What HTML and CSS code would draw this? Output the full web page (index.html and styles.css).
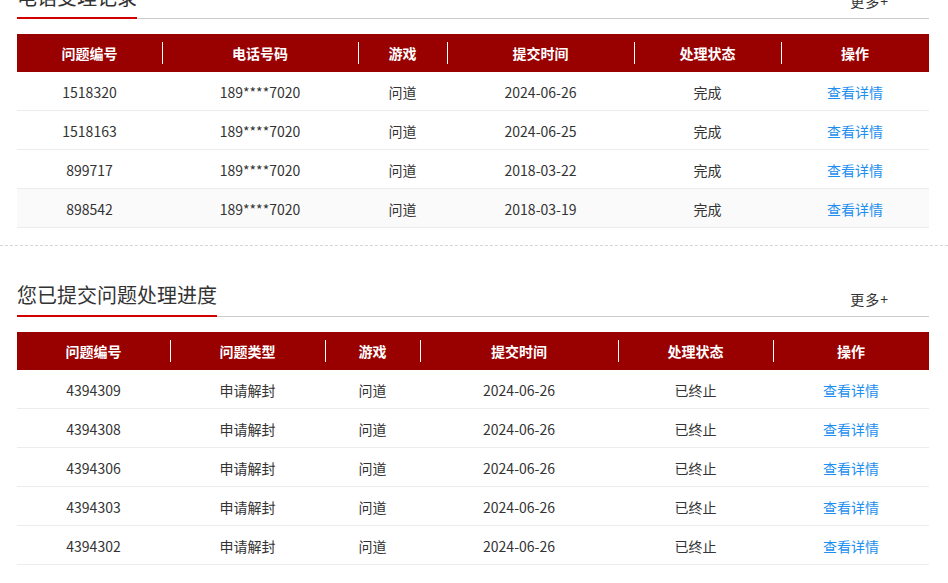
FILE: index.html
```html
<!DOCTYPE html>
<html lang="zh-CN">
<head>
<meta charset="utf-8">
<title>问题处理进度</title>
<link rel="stylesheet" href="styles.css">
</head>
<body>
<div class="page">
  <section class="panel">
    <div class="panel-head">
      <h2 class="panel-title">电话受理记录</h2>
      <a class="more" href="#">更多+</a>
    </div>
    <table class="grid grid-phone">
      <colgroup>
        <col class="c1"><col class="c2"><col class="c3"><col class="c4"><col class="c5"><col class="c6">
      </colgroup>
      <thead>
        <tr><th>问题编号</th><th>电话号码</th><th>游戏</th><th>提交时间</th><th>处理状态</th><th>操作</th></tr>
      </thead>
      <tbody>
        <tr><td>1518320</td><td>189****7020</td><td>问道</td><td>2024-06-26</td><td>完成</td><td><a href="#">查看详情</a></td></tr>
        <tr><td>1518163</td><td>189****7020</td><td>问道</td><td>2024-06-25</td><td>完成</td><td><a href="#">查看详情</a></td></tr>
        <tr><td>899717</td><td>189****7020</td><td>问道</td><td>2018-03-22</td><td>完成</td><td><a href="#">查看详情</a></td></tr>
        <tr class="hover"><td>898542</td><td>189****7020</td><td>问道</td><td>2018-03-19</td><td>完成</td><td><a href="#">查看详情</a></td></tr>
      </tbody>
    </table>
  </section>

  <section class="panel">
    <div class="panel-head">
      <h2 class="panel-title">您已提交问题处理进度</h2>
      <a class="more" href="#">更多+</a>
    </div>
    <table class="grid grid-issue">
      <colgroup>
        <col class="c1"><col class="c2"><col class="c3"><col class="c4"><col class="c5"><col class="c6">
      </colgroup>
      <thead>
        <tr><th>问题编号</th><th>问题类型</th><th>游戏</th><th>提交时间</th><th>处理状态</th><th>操作</th></tr>
      </thead>
      <tbody>
        <tr><td>4394309</td><td>申请解封</td><td>问道</td><td>2024-06-26</td><td>已终止</td><td><a href="#">查看详情</a></td></tr>
        <tr><td>4394308</td><td>申请解封</td><td>问道</td><td>2024-06-26</td><td>已终止</td><td><a href="#">查看详情</a></td></tr>
        <tr><td>4394306</td><td>申请解封</td><td>问道</td><td>2024-06-26</td><td>已终止</td><td><a href="#">查看详情</a></td></tr>
        <tr><td>4394303</td><td>申请解封</td><td>问道</td><td>2024-06-26</td><td>已终止</td><td><a href="#">查看详情</a></td></tr>
        <tr><td>4394302</td><td>申请解封</td><td>问道</td><td>2024-06-26</td><td>已终止</td><td><a href="#">查看详情</a></td></tr>
      </tbody>
    </table>
  </section>
</div>
</body>
</html>
```

FILE: styles.css
```css
html, body {
  margin: 0;
  padding: 0;
  background: #fff;
}

body {
  font-family: "Noto Sans CJK SC", "Noto Sans", sans-serif;
  font-size: 14px;
  color: #333;
  overflow: hidden;
}

.page {
  margin-top: -52px;
}

.panel {
  padding: 29px 19px 17px 17px;
  border-bottom: 1px dashed #d6d6d6;
}

.panel:last-child {
  border-bottom: none;
}

.panel-head {
  display: flex;
  justify-content: space-between;
  align-items: flex-end;
  border-bottom: 1px solid #cccccc;
}

.panel-title {
  margin: 0 0 -1px 0;
  font-size: 20px;
  font-weight: normal;
  line-height: 40px;
  color: #333;
  border-bottom: 2px solid #d40000;
}

.more {
  margin-right: 40px;
  font-size: 14px;
  line-height: 34px;
  letter-spacing: 1px;
  color: #333;
  text-decoration: none;
}

.grid {
  width: 100%;
  margin-top: 15px;
  border-collapse: separate;
  border-spacing: 0;
  table-layout: fixed;
}

.grid th {
  padding: 0;
  line-height: 38px;
  background: #990000 linear-gradient(#fff, #fff) no-repeat left center / 1px 22px;
  color: #fff;
  font-weight: bold;
  font-size: 14px;
  text-align: center;
}

.grid th:first-child {
  background-image: none;
}

.grid td {
  padding: 2px 0 0;
  line-height: 36px;
  text-align: center;
  border-bottom: 1px solid #ececec;
}

.grid tr.hover td {
  background: #fafafa;
}

.grid a {
  color: #1e8fef;
  text-decoration: none;
}

.grid-phone .c1 { width: 145px; }
.grid-phone .c2 { width: 196px; }
.grid-phone .c3 { width: 89px; }
.grid-phone .c4 { width: 187px; }
.grid-phone .c5 { width: 147px; }
.grid-phone .c6 { width: 148px; }

.grid-issue .c1 { width: 153px; }
.grid-issue .c2 { width: 155px; }
.grid-issue .c3 { width: 95px; }
.grid-issue .c4 { width: 198px; }
.grid-issue .c5 { width: 155px; }
.grid-issue .c6 { width: 156px; }
```
